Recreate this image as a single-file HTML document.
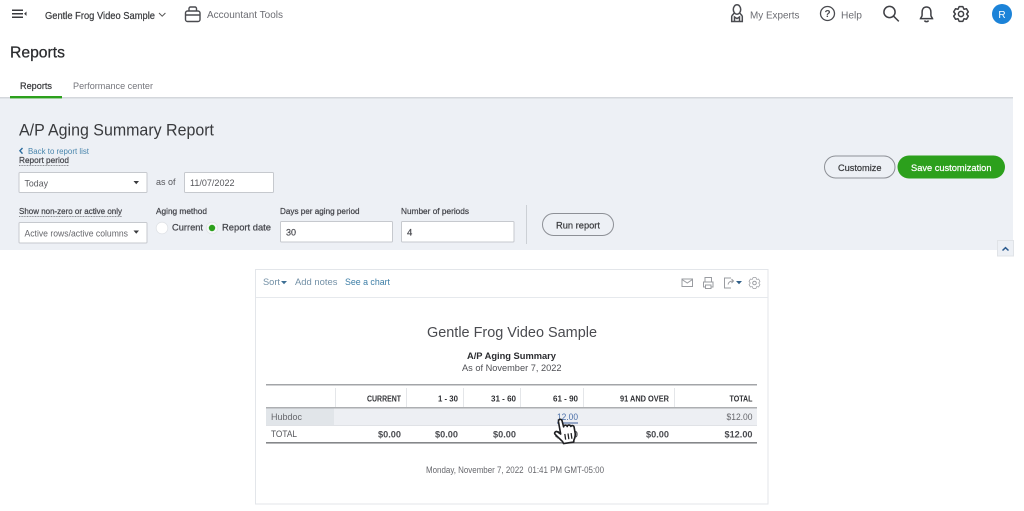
<!DOCTYPE html>
<html><head><meta charset="utf-8"><title>A/P Aging Summary Report</title>
<style>
html,body{margin:0;padding:0;background:#fff;width:1024px;height:511px;overflow:hidden}
svg{display:block;filter:blur(.35px)}
text{font-family:"Liberation Sans",sans-serif;white-space:pre}
.b{font-weight:bold}
.m{stroke:currentColor;stroke-width:.22px}
.e{text-anchor:end}
</style></head><body>
<svg width="1024" height="511" viewBox="0 0 1024 511" xmlns="http://www.w3.org/2000/svg">
<defs>
<path id="g" d="M-2.97-4.75L-1.84-7.37L1.84-7.37L2.97-4.75L5.47-5.28L7.31-2.09L5.6 0L7.31 2.09L5.47 5.28L2.97 4.75L1.84 7.37L-1.84 7.37L-2.97 4.75L-5.47 5.28L-7.31 2.09L-5.6 0L-7.31-2.09L-5.47-5.28Z" stroke-linejoin="round"/>
</defs>
<rect width="1024" height="511" fill="#fff"/>

<!-- top bar -->
<g fill="#393a3d">
<rect x="12" y="9.500" width="11" height="1.500"/><rect x="12" y="13" width="11" height="1.500"/><rect x="12" y="16.500" width="11" height="1.500"/>
<path d="M26.500 11.500v4.400l-2.400-2.200z"/>
</g>
<text x="45" y="19" font-size="10.500" class="m" color="#393a3d" fill="#393a3d" textLength="110" lengthAdjust="spacingAndGlyphs">Gentle Frog Video Sample</text>
<path d="M159 13l3.200 3.200 3.200-3.200" fill="none" stroke="#555" stroke-width="1"/>
<g fill="none" stroke="#4a4b50" stroke-width="1.400">
<rect x="185.500" y="11" width="14.500" height="10.500" rx="2"/>
<path d="M189 11V8.500a1.500 1.500 0 0 1 1.500-1.500h4.500a1.500 1.500 0 0 1 1.500 1.500V11M185.500 15h14.500"/>
</g>
<text x="207" y="18" font-size="10.500" fill="#6b6c72" textLength="76" lengthAdjust="spacingAndGlyphs">Accountant Tools</text>

<g fill="none" stroke="#4a4b50" stroke-width="1.500">
<ellipse cx="737" cy="9.500" rx="3.700" ry="4.700"/>
<path d="M734 13c-.4 1.800-2.200 1.800-2.300 3.500V21.500h10.600V16.500c-.1-1.700-1.900-1.700-2.300-3.500M734.500 21.500v-4.500l2.500 1.600 2.500-1.600v4.500"/>
</g>
<text x="750" y="18.500" font-size="10.500" fill="#6b6c72" textLength="49.500" lengthAdjust="spacingAndGlyphs">My Experts</text>
<circle cx="827.500" cy="13.500" r="7" fill="none" stroke="#4a4b50" stroke-width="1.300"/>
<text x="827.500" y="17" font-size="10" class="b" text-anchor="middle" fill="#4a4b50">?</text>
<text x="841" y="18.500" font-size="10.500" fill="#6b6c72" textLength="21" lengthAdjust="spacingAndGlyphs">Help</text>
<g fill="none" stroke="#3f4045" stroke-width="1.500">
<circle cx="889.500" cy="12" r="5.600"/><path d="M893.600 16.200l5.200 5.200"/>
<path d="M926.500 7c-3.200 0-4.400 2.400-4.400 5v3.200c0 1.400-1.400 2.600-1.600 3.400h12c-.2-.8-1.600-2-1.600-3.400V12c0-2.600-1.200-5-4.400-5z"/>
<path d="M924.500 20.500a2.200 2 0 0 0 4 0"/>
<use href="#g" transform="translate(961 14)"/>
<circle cx="961" cy="14" r="2.600"/>
</g>
<circle cx="1002" cy="14" r="10" fill="#1c83d8"/>
<text x="1002" y="17.800" font-size="10" text-anchor="middle" fill="#fff">R</text>

<!-- heading & tabs -->
<text x="10" y="57.500" font-size="16" fill="#2a2b2e" stroke="#2a2b2e" stroke-width=".25" textLength="55" lengthAdjust="spacingAndGlyphs">Reports</text>
<text x="20" y="89" font-size="9.500" class="m" fill="#393a3d" color="#393a3d" textLength="32" lengthAdjust="spacingAndGlyphs">Reports</text>
<text x="73" y="89" font-size="9.500" fill="#74757b" textLength="80" lengthAdjust="spacingAndGlyphs">Performance center</text>

<!-- filter panel -->
<rect x="0" y="98" width="1013" height="152" fill="#edf0f5"/>
<rect x="0" y="97" width="1013" height="1.500" fill="#d4d7dc"/>
<rect x="10" y="96" width="52" height="2.400" fill="#2ca01c"/>

<text x="19" y="135.500" font-size="16.500" fill="#393a3d" textLength="195" lengthAdjust="spacingAndGlyphs">A/P Aging Summary Report</text>
<path d="M22.500 148l-2.600 2.800 2.600 2.800" fill="none" stroke="#2b6c9e" stroke-width="1.400"/>
<text x="28" y="154" font-size="8" fill="#4a86ad" textLength="61" lengthAdjust="spacingAndGlyphs">Back to report list</text>
<text x="19" y="163" font-size="8.500" class="m" fill="#43444a" color="#43444a" textLength="50" lengthAdjust="spacingAndGlyphs">Report period</text>
<path d="M19 165.500h50" stroke="#6b6c72" stroke-width=".8" stroke-dasharray="1 .6"/>

<g fill="#fff" stroke="#c6c9ce" stroke-width="1">
<rect x="19" y="172.500" width="128" height="20" rx="1"/>
<rect x="184.500" y="172.500" width="89" height="20" rx="1"/>
<rect x="19" y="222.500" width="128" height="20.500" rx="1"/>
<rect x="280.500" y="221.500" width="112" height="20.500" rx="1"/>
<rect x="401.500" y="221.500" width="112.500" height="20.500" rx="1"/>
</g>
<text x="24.500" y="186.500" font-size="9.500" fill="#5a5b60" textLength="23.500" lengthAdjust="spacingAndGlyphs">Today</text>
<path d="M133.500 181h5.500l-2.750 3.200z" fill="#393a3d"/>
<text x="156" y="185" font-size="9.500" fill="#55565b" textLength="19.500" lengthAdjust="spacingAndGlyphs">as of</text>
<text x="190" y="186" font-size="9.500" fill="#55565b" textLength="44.500" lengthAdjust="spacingAndGlyphs">11/07/2022</text>

<text x="19" y="214" font-size="8.500" class="m" fill="#43444a" color="#43444a" textLength="103" lengthAdjust="spacingAndGlyphs">Show non-zero or active only</text>
<path d="M19 216.500h103" stroke="#6b6c72" stroke-width=".8" stroke-dasharray="1 .6"/>
<text x="24.500" y="236.500" font-size="9.500" fill="#66676c" textLength="103.500" lengthAdjust="spacingAndGlyphs">Active rows/active columns</text>
<path d="M133.500 230.500h5.500l-2.750 3.200z" fill="#393a3d"/>

<text x="156" y="214" font-size="8.500" class="m" fill="#43444a" color="#43444a" textLength="51" lengthAdjust="spacingAndGlyphs">Aging method</text>
<circle cx="162" cy="228" r="5.800" fill="#fff" stroke="#dfe2e6" stroke-width=".8"/>
<text x="172" y="230.500" font-size="9.500" class="m" fill="#43444a" color="#43444a" textLength="31" lengthAdjust="spacingAndGlyphs">Current</text>
<circle cx="212" cy="228" r="5.800" fill="#f4f6f8" stroke="#dfe2e6" stroke-width=".8"/>
<circle cx="212" cy="228" r="3.200" fill="#2ca01c"/>
<text x="222" y="230.500" font-size="9.500" class="m" fill="#43444a" color="#43444a" textLength="49" lengthAdjust="spacingAndGlyphs">Report date</text>

<text x="280" y="214" font-size="8.500" class="m" fill="#43444a" color="#43444a" textLength="79.500" lengthAdjust="spacingAndGlyphs">Days per aging period</text>
<text x="286" y="235.500" font-size="9.500" class="m" fill="#4b4c52" color="#4b4c52" textLength="10" lengthAdjust="spacingAndGlyphs">30</text>
<text x="401" y="214" font-size="8.500" class="m" fill="#43444a" color="#43444a" textLength="68" lengthAdjust="spacingAndGlyphs">Number of periods</text>
<text x="407" y="235.500" font-size="9.500" class="m" fill="#4b4c52" color="#4b4c52">4</text>
<rect x="526" y="205" width="1" height="39" fill="#ccd0d5"/>

<rect x="542.500" y="213.500" width="71" height="22" rx="11" fill="#edf0f5" stroke="#8d9096"/>
<text x="556" y="228.500" font-size="9.500" class="m" fill="#393a3d" color="#393a3d" textLength="44" lengthAdjust="spacingAndGlyphs">Run report</text>
<rect x="824.500" y="156" width="70.500" height="22" rx="11" fill="#edf0f5" stroke="#8d9096"/>
<text x="838" y="171" font-size="9.500" class="m" fill="#393a3d" color="#393a3d" textLength="43.500" lengthAdjust="spacingAndGlyphs">Customize</text>
<rect x="897.500" y="155.500" width="107.500" height="23" rx="11.500" fill="#2ca01c"/>
<text x="911" y="171" font-size="9.500" class="m" fill="#fff" color="#fff" textLength="80.500" lengthAdjust="spacingAndGlyphs">Save customization</text>
<rect x="997.500" y="240.500" width="16" height="15.500" fill="#edf0f5" stroke="#e0e3e7"/>
<path d="M1002.500 250.500l3-2.800 3 2.800" fill="none" stroke="#2a5a8e" stroke-width="1.500"/>

<!-- report card -->
<rect x="255.500" y="269.500" width="512.500" height="234.500" fill="#fff" stroke="#e3e6ea"/>
<rect x="256" y="297" width="512" height="1" fill="#e6e9ed"/>
<text x="263" y="285" font-size="9.500" fill="#7390a6" textLength="17" lengthAdjust="spacingAndGlyphs">Sort</text>
<path d="M281 281h6l-3 3.200z" fill="#3d6f94"/>
<text x="295" y="285" font-size="9.500" fill="#7390a6" textLength="42.500" lengthAdjust="spacingAndGlyphs">Add notes</text>
<text x="345" y="285" font-size="9.500" fill="#3d7ea6" textLength="45" lengthAdjust="spacingAndGlyphs">See a chart</text>

<g fill="none" stroke="#9a9ca1" stroke-width="1">
<rect x="682" y="279" width="10.500" height="7.500"/><path d="M682 279.500l5.250 3.500 5.250-3.500"/>
<path d="M705 282v-4.500h6.500V282M705.500 287h-2v-5h9.500v5h-2M705.500 285h5.500v3.500h-5.500z"/>
<path d="M731 288h-6.500v-10h6.500M728 284.500c.5-2.500 2-3.500 5-3.500M731.500 279l2 2-2 2"/>
<use href="#g" transform="translate(754.500 283) scale(.75)"/>
<circle cx="754.500" cy="283" r="1.800"/>
</g>
<path d="M736 281h6l-3 3.200z" fill="#2f5f88"/>

<text x="427" y="337" font-size="14.500" fill="#4a4b50" textLength="170" lengthAdjust="spacingAndGlyphs">Gentle Frog Video Sample</text>
<text x="467" y="359" font-size="9.500" class="b" fill="#2b2c30" textLength="89" lengthAdjust="spacingAndGlyphs">A/P Aging Summary</text>
<text x="462" y="371" font-size="9.500" fill="#4f5055" textLength="99.500" lengthAdjust="spacingAndGlyphs">As of November 7, 2022</text>

<!-- table -->
<rect x="266" y="384" width="491" height="1.500" fill="#a3a5a8"/>
<rect x="266" y="408" width="491" height="17" fill="#edeff3"/>
<rect x="266" y="408" width="68" height="17" fill="#e1e5e9"/>
<rect x="266" y="407" width="491" height="1.500" fill="#adafb2"/>
<rect x="266" y="425" width="491" height="1" fill="#e0e2e6"/>
<rect x="266" y="442" width="491" height="1.600" fill="#85878a"/>
<g fill="#e4e6e9">
<rect x="335" y="388" width="1" height="19"/><rect x="406" y="388" width="1" height="19"/><rect x="463" y="388" width="1" height="19"/><rect x="520" y="388" width="1" height="19"/><rect x="583" y="388" width="1" height="19"/><rect x="674" y="388" width="1" height="19"/>
</g>
<g font-size="8" fill="#2f3034">
<text x="401" y="401.500" class="e b" textLength="34" lengthAdjust="spacingAndGlyphs">CURRENT</text>
<text x="458" y="401.500" class="e b" textLength="20" lengthAdjust="spacingAndGlyphs">1 - 30</text>
<text x="516" y="401.500" class="e b" textLength="25" lengthAdjust="spacingAndGlyphs">31 - 60</text>
<text x="578" y="401.500" class="e b" textLength="25" lengthAdjust="spacingAndGlyphs">61 - 90</text>
<text x="669" y="401.500" class="e b" textLength="49" lengthAdjust="spacingAndGlyphs">91 AND OVER</text>
<text x="752.500" y="401.500" class="e b" textLength="23" lengthAdjust="spacingAndGlyphs">TOTAL</text>
</g>
<text x="271" y="420" font-size="9.500" fill="#66676c" textLength="31" lengthAdjust="spacingAndGlyphs">Hubdoc</text>
<text x="557" y="420" font-size="9.500" fill="#4a6ea8" textLength="21" lengthAdjust="spacingAndGlyphs">12.00</text>
<rect x="557" y="422.500" width="21" height="1" fill="#3f5f9a"/>
<text x="752.500" y="420" font-size="9.500" class="e" fill="#66676c" textLength="26" lengthAdjust="spacingAndGlyphs">$12.00</text>
<text x="271" y="437" font-size="9" fill="#55565b" textLength="26" lengthAdjust="spacingAndGlyphs">TOTAL</text>
<g font-size="9" fill="#4a4b50">
<text x="401" y="437.500" class="e b" textLength="23" lengthAdjust="spacingAndGlyphs">$0.00</text>
<text x="458" y="437.500" class="e b" textLength="23" lengthAdjust="spacingAndGlyphs">$0.00</text>
<text x="516" y="437.500" class="e b" textLength="23" lengthAdjust="spacingAndGlyphs">$0.00</text>
<text x="578" y="437.500" class="e b" textLength="23" lengthAdjust="spacingAndGlyphs">$0.00</text>
<text x="669" y="437.500" class="e b" textLength="23" lengthAdjust="spacingAndGlyphs">$0.00</text>
<text x="752.500" y="437.500" class="e b" textLength="28" lengthAdjust="spacingAndGlyphs">$12.00</text>
</g>

<!-- hand cursor -->
<g transform="translate(565 431) rotate(-8) scale(1.15) translate(-564 -431)">
<path d="M559.500 422c0-2.200 3.200-2.200 3.200 0l.6 5.200c.3-1.600 3-1.500 3.200.2.300-1.500 2.900-1.300 3.100.4.500-1.100 2.600-.8 2.700.8l.2 5.400c0 3-1 4.400-2 6l-.3 1.600h-9l-.6-1.800c-1.400-1.800-3.600-4.600-5.400-7-1.200-1.800.9-3.200 2.400-1.800l2.300 2.100z" fill="#fff" stroke="#1f2023" stroke-width="1.400" stroke-linejoin="round"/>
<path d="M563.500 433.500v5M566.300 433.500v5M569 433.500v5" stroke="#1f2023" stroke-width="1.100" fill="none"/>
</g>

<text x="426" y="473" font-size="9" fill="#66676c" textLength="178" lengthAdjust="spacingAndGlyphs">Monday, November 7, 2022  01:41 PM GMT-05:00</text>
</svg>
</body></html>
